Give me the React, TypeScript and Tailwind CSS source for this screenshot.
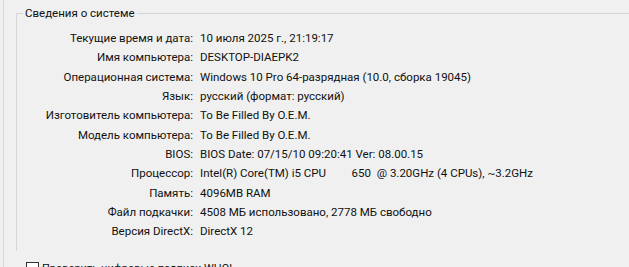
const rows: [string, string][] = [
  ['Текущие время и дата:', '10 июля 2025 г., 21:19:17'],
  ['Имя компьютера:', 'DESKTOP-DIAEPK2'],
  ['Операционная система:', 'Windows 10 Pro 64-разрядная (10.0, сборка 19045)'],
  ['Язык:', 'русский (формат: русский)'],
  ['Изготовитель компьютера:', 'To Be Filled By O.E.M.'],
  ['Модель компьютера:', 'To Be Filled By O.E.M.'],
  ['BIOS:', 'BIOS Date: 07/15/10 09:20:41 Ver: 08.00.15'],
  ['Процессор:', 'Intel(R) Core(TM) i5 CPU         650  @ 3.20GHz (4 CPUs), ~3.2GHz'],
  ['Память:', '4096MB RAM'],
  ['Файл подкачки:', '4508 МБ использовано, 2778 МБ свободно'],
  ['Версия DirectX:', 'DirectX 12'],
];

export default function App() {
  return (
    <div
      className="w-[629px] h-[267px] overflow-hidden bg-[#f0f0f0] text-[11.5px] text-[#111]"
      style={{ fontFamily: 'Roboto, "Noto Sans", sans-serif' }}
    >
      <div className="ml-[3px] h-full border-l border-[#dadada] pl-[12px] pt-[13px]">
        <div className="relative h-[238px] border-t border-l border-[#d5d5d5] pt-[15px]">
          <span className="absolute left-[6px] top-[-10px] bg-[#f0f0f0] px-[2px] leading-[18px]">
            Сведения о системе
          </span>
          <div className="grid grid-cols-[176px_1fr] gap-x-[7px]">
            {rows.map(([label, value]) => (
              <div key={label} className="contents">
                <div className="text-right leading-[19.33px] whitespace-nowrap">{label}</div>
                <div className="leading-[19.33px] whitespace-pre">{value}</div>
              </div>
            ))}
          </div>
        </div>
        <div className="flex items-start gap-[3px] pl-[10px] pt-[11px]">
          <div className="h-[13px] w-[13px] shrink-0 border border-[#333] bg-white" />
          <span className="mt-[-1px] text-[11px] leading-[16px]">Проверить цифровые подписи WHQL</span>
        </div>
      </div>
    </div>
  );
}
